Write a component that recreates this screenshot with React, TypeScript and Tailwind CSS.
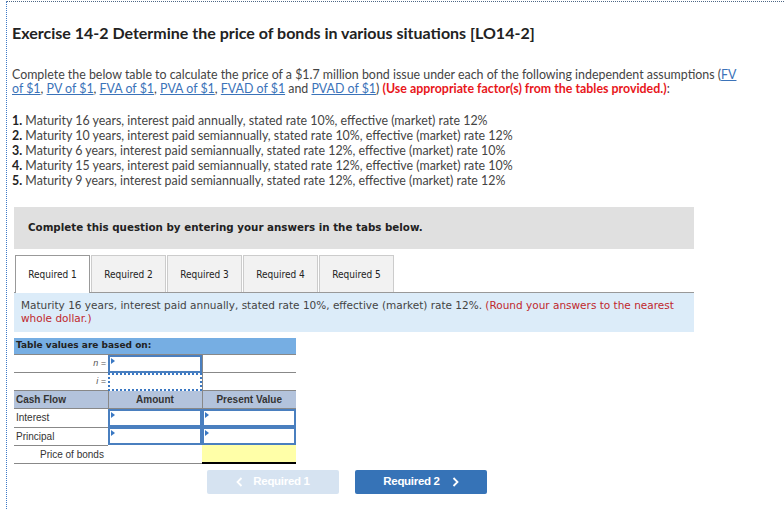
import React from 'react';

const Marker: React.FC = () => (
    <span className="absolute left-[1px] top-[1px] w-0 h-0 border-t-[3px] border-b-[3px] border-l-[4px] border-t-transparent border-b-transparent border-l-[#3a78c3]" />
);

const InputCell: React.FC<{ dotted?: boolean }> = ({ dotted }) => (
    <div className={`relative h-[18px] w-full ${dotted ? 'border-2 border-dotted border-[#3a78c3]' : 'border-2 border-[#4a7fbf]'}`}>
        {!dotted && <Marker />}
    </div>
);

const Chevron: React.FC<{ left?: boolean }> = ({ left }) => (
    <svg width="7" height="10" viewBox="0 0 7 10" className="shrink-0">
        <path d={left ? 'M5.5 1 L1.5 5 L5.5 9' : 'M1.5 1 L5.5 5 L1.5 9'} fill="none" stroke="white" strokeWidth="1.8" />
    </svg>
);

const App: React.FC = () => {
    const items = [
        'Maturity 16 years, interest paid annually, stated rate 10%, effective (market) rate 12%',
        'Maturity 10 years, interest paid semiannually, stated rate 10%, effective (market) rate 12%',
        'Maturity 6 years, interest paid semiannually, stated rate 12%, effective (market) rate 10%',
        'Maturity 15 years, interest paid semiannually, stated rate 12%, effective (market) rate 10%',
        'Maturity 9 years, interest paid semiannually, stated rate 12%, effective (market) rate 12%',
    ];
    const links = ['PV of $1', 'FVA of $1', 'PVA of $1'];

    return (
        <div className="w-[784px] h-[509px] bg-white overflow-hidden pt-[1px]">
            <div className="ml-[6px] h-full border-l border-t border-dotted border-l-[#3b78c8] border-t-[#4d6785] pl-[5px] pr-2 font-['Lato',sans-serif] text-[#333]">
                <h1 className="mt-[21px] text-[16px] font-bold text-[#222] leading-[20px]">
                    Exercise 14-2 Determine the price of bonds in various situations [LO14-2]
                </h1>

                <p className="mt-[25px] w-[736px] text-[12.4px] leading-[14px] text-[#444]">
                    Complete the below table to calculate the price of a $1.7 million bond issue under each of the following independent assumptions (<a className="text-[#3b73b9] underline">FV of $1</a>,{' '}
                    {links.map(l => (
                        <React.Fragment key={l}>
                            <a className="text-[#3b73b9] underline">{l}</a>,{' '}
                        </React.Fragment>
                    ))}
                    <a className="text-[#3b73b9] underline">FVAD of $1</a> and <a className="text-[#3b73b9] underline">PVAD of $1</a>) <span className="font-bold text-[#e8161b]">(Use appropriate factor(s) from the tables provided.)</span>:
                </p>

                <ol className="mt-[17px] text-[12.4px] leading-[15px] text-[#444]">
                    {items.map((t, i) => (
                        <li key={i}><span className="font-bold text-[#222]">{i + 1}.</span> {t}</li>
                    ))}
                </ol>

                <div className="w-[680px] ml-[2px] mt-[19px] font-['DejaVu_Sans',sans-serif]">
                    <div className="h-[42px] bg-[#e0e0e0] flex items-center pl-[14px] text-[10.3px] font-bold text-[#222]">
                        Complete this question by entering your answers in the tabs below.
                    </div>

                    <div className="mt-[6px] flex items-end h-[38px] border-b border-[#999]">
                        {[1, 2, 3, 4, 5].map(n => (
                            <div
                                key={n}
                                className={`w-[75px] mr-[1px] flex items-center justify-center text-[10px] font-['DejaVu_Sans_Condensed','DejaVu_Sans',sans-serif] text-[#222] border border-b-0 ${n === 1 ? 'bg-white border-[#999] relative top-[1px] h-[38px] ml-[1px]' : 'bg-[#f2f2f2] border-[#ccc] h-[37px]'}`}
                            >
                                Required {n}
                            </div>
                        ))}
                    </div>

                    <div className="h-[39px] bg-[#dcecf9] px-[7px] pt-[6px] text-[10.5px] leading-[13px] text-[#444]">
                        Maturity 16 years, interest paid annually, stated rate 10%, effective (market) rate 12%. <span className="text-[#c0282d]">(Round your answers to the nearest whole dollar.)</span>
                    </div>

                    <table className="mt-[6px] w-[282px] border-collapse text-[10px] font-['Liberation_Sans',sans-serif] text-[#333] table-fixed">
                        <colgroup>
                            <col className="w-[94px]" />
                            <col className="w-[94px]" />
                            <col className="w-[94px]" />
                        </colgroup>
                        <tbody>
                            <tr className="h-[16px] bg-[#76aee3]">
                                <td colSpan={3} className="pl-[2px] py-0 font-bold text-[9px] leading-[15px] font-['DejaVu_Sans',sans-serif] text-[#222] border-b border-[#888]">
                                    Table values are based on:
                                </td>
                            </tr>
                            <tr className="h-[18px]">
                                <td className="text-right pr-[2px] italic text-[9px] text-[#555] border-b border-[#888]">n =</td>
                                <td className="p-0"><InputCell /></td>
                                <td className="border-b border-l border-[#888]"></td>
                            </tr>
                            <tr className="h-[18px]">
                                <td className="text-right pr-[2px] italic text-[9px] text-[#555] border-b border-[#888]">i =</td>
                                <td className="p-0"><InputCell dotted /></td>
                                <td className="border-b border-l border-[#888]"></td>
                            </tr>
                            <tr className="h-[18px] bg-[#b3c3dc] font-bold text-[#333]">
                                <td className="pl-[2px] border-b border-[#888]">Cash Flow</td>
                                <td className="text-center border-l border-b border-[#888]">Amount</td>
                                <td className="text-center border-l border-b border-[#888]">Present Value</td>
                            </tr>
                            <tr className="h-[18px]">
                                <td className="pl-[2px] border-b border-[#888]">Interest</td>
                                <td className="p-0"><InputCell /></td>
                                <td className="p-0"><InputCell /></td>
                            </tr>
                            <tr className="h-[18px]">
                                <td className="pl-[2px] border-b border-[#888]">Principal</td>
                                <td className="p-0"><InputCell /></td>
                                <td className="p-0"><InputCell /></td>
                            </tr>
                            <tr className="h-[18px]">
                                <td colSpan={2} className="pl-[26px] border-b border-[#888]">Price of bonds</td>
                                <td className="bg-[#ffffa8] border-b-2 border-black"></td>
                            </tr>
                        </tbody>
                    </table>

                    <div className="mt-[6px] ml-[193px] flex gap-[16px] font-['Liberation_Sans',sans-serif]">
                        <div className="w-[132px] h-[24px] bg-[#d6e3f1] rounded-[2px] flex items-center justify-center gap-[10px] text-white text-[11.5px] font-bold tracking-[-0.3px]">
                            <Chevron left />Required 1
                        </div>
                        <div className="w-[132px] h-[24px] bg-[#3673b7] rounded-[2px] flex items-center justify-center gap-[12px] text-white text-[11.5px] font-bold tracking-[-0.3px]">
                            Required 2<Chevron />
                        </div>
                    </div>
                </div>
            </div>
        </div>
    );
};

export default App;
